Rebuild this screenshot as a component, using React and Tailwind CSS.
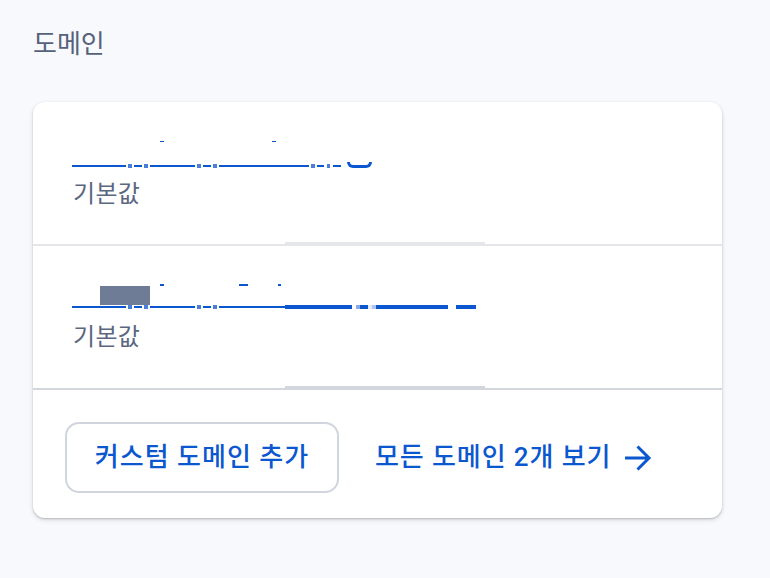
import React from 'react';

const FONT = 'font-["Roboto","Noto_Sans_CJK_KR",sans-serif]';

// redacted domain name: remaining underline pieces [gap, width, kind]
const row1Line = [
  [0, 54, 'l'], [2, 4, 'd'], [2, 8, 'l'], [2, 4, 'd'], [2, 45, 'l'], [2, 4, 'd'], [2, 8, 'l'], [2, 4, 'd'],
  [2, 90, 'l'], [2, 4, 'd'], [2, 7, 'l'], [3, 3, 'd'], [3, 8, 'l'], [6, 25, 'b'],
];

const row2Line = [
  [0, 54, 'l'], [2, 4, 'd'], [2, 8, 'l'], [2, 4, 'd'], [2, 45, 'l'], [2, 4, 'd'], [2, 8, 'l'], [2, 4, 'd'],
  [2, 66, 'l'], [0, 67, 't'], [4, 4, 'tl'], [0, 8, 't'], [0, 4, 'tw'], [0, 4, 'tm'], [0, 72, 't'], [8, 20, 't'],
];

const Segment = ({ gap, width, kind }) => {
  const style = { marginLeft: gap, width };
  if (kind === 'l') return <div style={style} className="h-[2px] bg-[#0b57d0]" />;
  if (kind === 'd') return <div style={style} className="h-[4px] bg-[#4c7fdb]" />;
  if (kind === 'b')
    return <div style={style} className="h-[6px] -mt-[3px] border-x-[3px] border-b-[3px] border-[#0b57d0] rounded-b-[8px]" />;
  if (kind === 'tl') return <div style={style} className="h-[4px] bg-[#8aa9e6]" />;
  if (kind === 'tw') return <div style={style} className="h-[4px] bg-[#e4eaf8]" />;
  if (kind === 'tm') return <div style={style} className="h-[4px] bg-[#b4c6ee]" />;
  return <div style={style} className="h-[4px] bg-[#0b57d0]" />;
};

const Ticks = ({ items, height }) => (
  <div className="flex">
    {items.map(([gap, width], i) => (
      <div key={i} style={{ marginLeft: gap, width, height }} className="bg-[#0b57d0]" />
    ))}
  </div>
);

const Divider = ({ color }) => (
  <div className="flex items-end h-[4px]">
    <div className={`w-[252px] h-[2px] ${color}`} />
    <div className={`w-[200px] h-[4px] ${color}`} />
    <div className={`flex-1 h-[2px] ${color}`} />
  </div>
);

const DefaultLabel = ({ className }) => (
  <div className={`text-[24px] leading-[28px] tracking-[0.3px] text-[#5b6780] ${className}`}>기본값</div>
);

export default function App() {
  return (
    <div className={`min-h-[578px] bg-[#f8f9fd] px-[33px] pt-[28px] ${FONT}`}>
      <h2 className="text-[26px] leading-[32px] text-[#56627c]">도메인</h2>

      <div className="mt-[42px] w-[689px] bg-white rounded-[12px] shadow-[0_1px_2px_rgba(0,0,0,0.18),0_2px_5px_rgba(0,0,0,0.12)] overflow-hidden">
        {/* 도메인 1 */}
        <div className="h-[140px] pl-[39px] pt-[39px]">
          <Ticks items={[[88, 4], [108, 4]]} height={1} />
          <div className="mt-[22px] flex items-center h-[4px]">
            {row1Line.map(([g, w, k], i) => (
              <Segment key={i} gap={g} width={w} kind={k} />
            ))}
          </div>
          <DefaultLabel className="mt-[12px] ml-[1px]" />
        </div>
        <Divider color="bg-[#e4e6ea]" />

        {/* 도메인 2 */}
        <div className="h-[140px] pl-[39px] pt-[38px]">
          <Ticks items={[[88, 4], [75, 9], [30, 3]]} height={2} />
          <div className="ml-[28px] w-[50px] h-[19px] bg-[#6f7c95]" />
          <div className="flex items-center h-[4px]">
            {row2Line.map(([g, w, k], i) => (
              <Segment key={i} gap={g} width={w} kind={k} />
            ))}
          </div>
          <DefaultLabel className="mt-[14px] ml-[1px]" />
        </div>
        <Divider color="bg-[#d2d6dd]" />

        {/* 하단 버튼 */}
        <div className="h-[128px] px-8 pt-[32px] flex items-start">
          <button
            type="button"
            className="h-[71px] w-[274px] rounded-[14px] border-2 border-[#d0d5de] text-[26px] tracking-[1px] font-medium text-[#0b57d0] flex items-center justify-center"
          >
            커스텀 도메인 추가
          </button>
          <a href="#" className="ml-[36px] h-[71px] flex items-center text-[26px] tracking-[0.9px] font-medium text-[#0b57d0]">
            모든 도메인 2개 보기
            <svg className="ml-[13px]" width="28" height="26" viewBox="0 0 28 26" fill="none" stroke="currentColor" strokeWidth="3">
              <path d="M1 13H25M13.5 1.5L25 13L13.5 24.5" />
            </svg>
          </a>
        </div>
      </div>
    </div>
  );
}
